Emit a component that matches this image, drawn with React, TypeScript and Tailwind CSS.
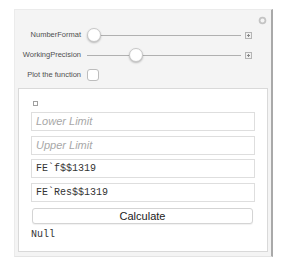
import React from "react";

const sans = { fontFamily: '"Liberation Sans", Arial, sans-serif' };
const mono = { fontFamily: '"Liberation Mono", "Courier New", monospace' };

const PlusBox = () => (
  <svg width="7" height="7" viewBox="0 0 7 7" className="shrink-0">
    <rect x="0.5" y="0.5" width="6" height="6" fill="#f0f0f0" stroke="#b5b5b5" />
    <path d="M3.5 2v3M2 3.5h3" stroke="#8a8a8a" strokeWidth="1" />
  </svg>
);

const Slider = ({ pos }: { pos: number }) => (
  <div className="relative flex h-[20px] w-[154px] items-center">
    <div className="h-px w-full bg-[#b0b0b0]" />
    <div
      className="absolute top-[3px] h-[14px] w-[14px] rounded-full border border-[#c8c8c8] bg-white shadow-[0_1px_2px_rgba(0,0,0,0.25)]"
      style={{ left: pos }}
    />
  </div>
);

const Row = ({ label, children }: { label: string; children: React.ReactNode }) => (
  <div className="flex h-[20px] items-center">
    <div className="w-[68px] pr-[2px] text-right text-[7.5px] text-[#505050]" style={sans}>
      {label}
    </div>
    <div className="ml-[4px] flex items-center gap-[4px]">{children}</div>
  </div>
);

const Field = ({ text, placeholder, className }: { text?: string; placeholder?: string; className?: string }) => (
  <div className={"flex h-[19px] w-[224px] items-center border border-[#dedede] bg-white px-[4px] " + (className ?? "")}>
    {placeholder ? (
      <span className="text-[11px] italic text-[#a8a8a8]" style={sans}>
        {placeholder}
      </span>
    ) : (
      <span className="text-[10px] text-[#333]" style={mono}>
        {text}
      </span>
    )}
  </div>
);

const App = () => {
  return (
    <div className="h-[269px] w-[288px] bg-white pl-[14px] pt-[9px]">
      <div className="flex h-[248px] w-[259px] flex-col border-t border-l border-[#ebebeb] border-r-2 border-r-[#a9a9a9] border-b border-b-[#e4e4e4] bg-[#f4f4f4] pt-[6px] pb-[4px]">
        <div className="flex h-[8px] justify-end pr-[4px]">
          <svg width="9" height="9" viewBox="0 0 9 9">
            <circle cx="4.5" cy="4.5" r="3.8" fill="#c4c4c4" />
            <circle cx="4.5" cy="4.5" r="2" fill="#f4f4f4" />
          </svg>
        </div>
        <div className="mt-[1px]">
          <Row label="NumberFormat">
            <Slider pos={0} />
            <PlusBox />
          </Row>
          <Row label="WorkingPrecision">
            <Slider pos={42} />
            <PlusBox />
          </Row>
          <Row label="Plot the function">
            <div className="h-[12px] w-[12px] rounded-[3px] border border-[#bdbdbd] bg-white" />
          </Row>
        </div>
        <div className="mx-[3px] mt-[3px] flex flex-1 flex-col border border-[#d9d9d9] bg-white pl-[12px] pt-[12px]">
          <div className="ml-[2px] h-[5px] w-[5px] border border-[#a0a0a0] bg-white" />
          <Field placeholder="Lower Limit" className="mt-[6px]" />
          <Field placeholder="Upper Limit" className="mt-[5px]" />
          <Field text="FE`f$$1319" className="mt-[4px]" />
          <Field text="FE`Res$$1319" className="mt-[5px]" />
          <div
            className="ml-[1px] mt-[6px] flex h-[16px] w-[221px] items-center justify-center rounded-[3px] border border-[#d4d4d4] bg-white text-[11px] text-[#222] shadow-[0_1px_1px_rgba(0,0,0,0.06)]"
            style={sans}
          >
            Calculate
          </div>
          <div className="mt-[3px] text-[10px] text-[#333]" style={mono}>
            Null
          </div>
        </div>
      </div>
    </div>
  );
};

export default App;
